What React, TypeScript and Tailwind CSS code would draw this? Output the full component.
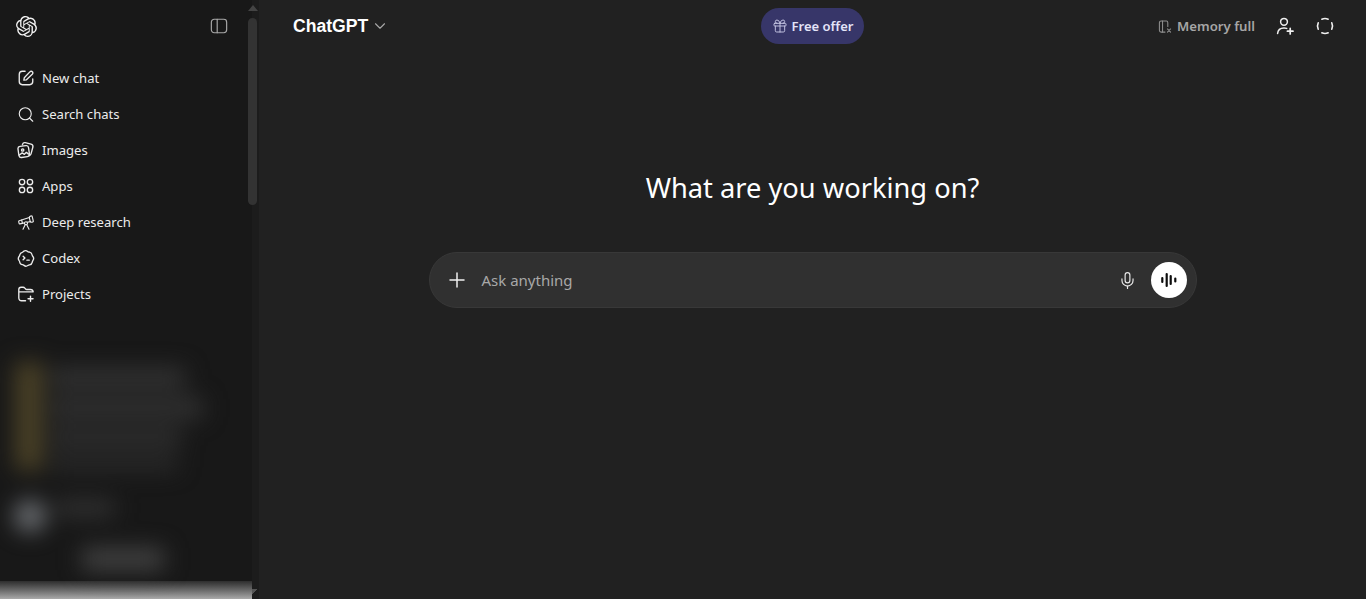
import React from 'react';
import { Gift, Mic, Plus, Search, Telescope, ChevronDown } from 'lucide-react';

const uiFont = "font-['Noto_Sans','Open_Sans',sans-serif]";

const OpenAiLogo = () => (
  <svg viewBox="0 0 24 24" className="w-[21px] h-[21px]" fill="#f2f2f2">
    <path d="M22.2819 9.8211a5.9847 5.9847 0 0 0-.5157-4.9108 6.0462 6.0462 0 0 0-6.5098-2.9A6.0651 6.0651 0 0 0 4.9807 4.1818a5.9847 5.9847 0 0 0-3.9977 2.9 6.0462 6.0462 0 0 0 .7427 7.0966 5.98 5.98 0 0 0 .511 4.9107 6.051 6.051 0 0 0 6.5146 2.9001A5.9847 5.9847 0 0 0 13.2599 24a6.0557 6.0557 0 0 0 5.7718-4.2058 5.9894 5.9894 0 0 0 3.9977-2.9001 6.0557 6.0557 0 0 0-.7475-7.0729zm-9.022 12.6081a4.4755 4.4755 0 0 1-2.8764-1.0408l.1419-.0804 4.7783-2.7582a.7948.7948 0 0 0 .3927-.6813v-6.7369l2.02 1.1686a.071.071 0 0 1 .038.052v5.5826a4.504 4.504 0 0 1-4.4945 4.4944zm-9.6607-4.1254a4.4708 4.4708 0 0 1-.5346-3.0137l.142.0852 4.783 2.7582a.7712.7712 0 0 0 .7806 0l5.8428-3.3685v2.3324a.0804.0804 0 0 1-.0332.0615L9.74 19.9502a4.4992 4.4992 0 0 1-6.1408-1.6464zM2.3408 7.8956a4.485 4.485 0 0 1 2.3655-1.9728V11.6a.7664.7664 0 0 0 .3879.6765l5.8144 3.3543-2.0201 1.1685a.0757.0757 0 0 1-.071 0l-4.8303-2.7865A4.504 4.504 0 0 1 2.3408 7.872zm16.5963 3.8558L13.1038 8.364 15.1192 7.2a.0757.0757 0 0 1 .071 0l4.8303 2.7913a4.4944 4.4944 0 0 1-.6765 8.1042v-5.6772a.79.79 0 0 0-.407-.667zm2.0107-3.0231l-.142-.0852-4.7735-2.7818a.7759.7759 0 0 0-.7854 0L9.409 9.2297V6.8974a.0662.0662 0 0 1 .0284-.0615l4.8303-2.7866a4.4992 4.4992 0 0 1 6.6802 4.66zM8.3065 12.863l-2.02-1.1638a.0804.0804 0 0 1-.038-.0567V6.0742a4.4992 4.4992 0 0 1 7.3757-3.4537l-.142.0805L8.704 5.459a.7948.7948 0 0 0-.3927.6813zm1.0976-2.3654l2.602-1.4998 2.6069 1.4998v2.9994l-2.5974 1.4997-2.6067-1.4997Z" />
  </svg>
);

const iconProps = {
  viewBox: '0 0 20 20',
  fill: 'none',
  stroke: 'currentColor',
  strokeWidth: 1.5,
  strokeLinecap: 'round' as const,
  strokeLinejoin: 'round' as const,
};

const SidebarToggle = () => (
  <svg {...iconProps} className="w-[18px] h-[18px] mt-[1px] text-[#a8a8a8]" strokeWidth={1.3}>
    <rect x="1.5" y="2.5" width="17" height="15" rx="3.2" />
    <path d="M8 2.500v15" />
  </svg>
);

const NewChatIcon = () => (
  <svg {...iconProps} className="w-[18px] h-[18px]">
    <path d="M9 2.500H6C3.800 2.500 2.500 3.800 2.500 6v8c0 2.200 1.300 3.500 3.500 3.500h8c2.200 0 3.500-1.300 3.500-3.500v-3" />
    <path d="M7.600 12.400l.5-2.600 6.200-6.600c.9-.9 2.100-.9 2.800-.1.800.8.700 1.900-.2 2.800l-6.400 6.100z" />
  </svg>
);

const ImagesIcon = () => (
  <svg {...iconProps} className="w-[18px] h-[18px]">
    <rect x="1.600" y="5.600" width="11.800" height="12.400" rx="2.600" transform="rotate(-8 7 12)" />
    <path d="M6 4.200l.2-.6c.4-1.300 1.700-2 3-1.700l6.400 1.600c1.500.4 2.400 1.900 2 3.400l-2 7.400c-.3 1.100-1.100 1.800-2.100 2" />
    <circle cx="6.300" cy="10" r="1.300" />
    <path d="M2.600 15.600l3.200-2.400 2.400 1.600 2.200-2.200 2.400 2" />
  </svg>
);

const AppsIcon = () => (
  <svg {...iconProps} className="w-[18px] h-[18px]">
    <circle cx="5.600" cy="5.600" r="3" />
    <circle cx="14.400" cy="5.600" r="3" />
    <circle cx="5.600" cy="14.400" r="3" />
    <circle cx="14.400" cy="14.400" r="3" />
  </svg>
);

const CodexIcon = () => (
  <svg {...iconProps} className="w-[18px] h-[18px]">
    <path d="M7.200 2.600c1.600-1 3.400-.9 4.600.2.600.5 1.400.5 2.200.7 1.500.4 2.600 1.600 2.800 3.200.1.700.5 1.300 1 1.900.9 1.300.8 3-.2 4.300-.4.600-.6 1.200-.7 1.900-.3 1.500-1.400 2.600-3 2.800-.7.100-1.300.4-1.900.8-1.300.9-3 .8-4.200-.2-.5-.4-1.100-.7-1.800-.8-1.600-.2-2.800-1.400-3-3-.1-.7-.4-1.300-.8-1.800-.9-1.300-.9-3 .1-4.300.4-.5.7-1.100.8-1.800.3-1.400 1.400-2.500 2.800-2.800.5-.1.900-.5 1.300-1.100z" />
    <path d="M6.800 8l2 2-2 2M11 12.400h2.600" />
  </svg>
);

const FolderPlusIcon = () => (
  <svg {...iconProps} className="w-[18px] h-[18px]">
    <path d="M9.500 17.500H5c-1.800 0-3-1.200-3-3V5c0-1.500 1-2.500 2.500-2.500h2.300c.8 0 1.400.3 1.900.9l.9 1.100c.3.4.7.5 1.200.5H15c1.600 0 2.800 1.100 3 2.600H2" />
    <path d="M15 12.500v5.500M12.300 15.300h5.500" strokeWidth={1.6} />
  </svg>
);

const MemoryFullIcon = () => (
  <svg {...iconProps} className="w-[14px] h-[15px] text-[#8f8f8f]" strokeWidth={1.5}>
    <path d="M14 10V4.500C14 3.100 13.100 2 12 2H4.500C3.100 2 2 3.100 2 4.500v11C2 16.900 3.100 18 4.500 18H10" />
    <path d="M6.500 2v16M13.500 13.500l4.500 4.500M18 13.500L13.500 18" />
  </svg>
);

const UserPlusIcon = () => (
  <svg {...iconProps} className="w-[20px] h-[20px]">
    <circle cx="9" cy="5.800" r="3.400" />
    <path d="M2.600 17.500c.3-3.600 2.800-5.600 6.400-5.600 1 0 1.900.2 2.700.5" />
    <path d="M15.200 12.400v5.600M12.400 15.200H18" strokeWidth={1.7} />
  </svg>
);

const DashedCircleIcon = () => (
  <svg {...iconProps} className="w-[20px] h-[20px]" strokeWidth={1.6}>
    <path d="M6.830 3.200a7.500 7.500 0 0 1 6.340 0M16.800 6.830a7.500 7.500 0 0 1 0 6.340M13.170 16.800a7.500 7.500 0 0 1-6.340 0M3.200 13.170a7.500 7.500 0 0 1 0-6.340" />
  </svg>
);

const VoiceIcon = () => (
  <svg viewBox="0 0 20 20" className="w-[20px] h-[20px]" fill="none" stroke="#0d0d0d" strokeWidth="2.200" strokeLinecap="round">
    <path d="M3.300 8v4M7.700 4v12M11.700 6v8M16.300 8.500v3" />
  </svg>
);

const navItems: { label: string; icon: React.ReactNode }[] = [
  { label: 'New chat', icon: <NewChatIcon /> },
  { label: 'Search chats', icon: <Search className="w-[19px] h-[19px]" strokeWidth={1.5} /> },
  { label: 'Images', icon: <ImagesIcon /> },
  { label: 'Apps', icon: <AppsIcon /> },
  { label: 'Deep research', icon: <Telescope className="w-[19px] h-[19px]" strokeWidth={1.5} /> },
  { label: 'Codex', icon: <CodexIcon /> },
  { label: 'Projects', icon: <FolderPlusIcon /> },
];

const Sidebar = () => (
  <aside className="w-[259px] h-full shrink-0 flex bg-[#181818] text-[#ececec]">
    <div className="w-[252px] shrink-0 flex flex-col overflow-hidden">
      <div className="h-[60px] shrink-0 flex justify-between pl-[16px] pr-[24px] pt-[16px]">
        <OpenAiLogo />
        <SidebarToggle />
      </div>
      <nav className="flex flex-col">
        {navItems.map((item) => (
          <div key={item.label} className="h-9 flex items-center gap-[7px] pl-[17px] text-[13.1px]">
            <span className="w-[18px] flex justify-center">{item.icon}</span>
            <span className="pt-[1px]">{item.label}</span>
          </div>
        ))}
      </nav>
      {/* recent chats and the account card are blurred out in the picture */}
      <div className="flex-1 min-h-0 overflow-hidden pt-[50px] blur-[11px]">
        <div className="flex gap-[8px] pl-[15px]">
          <div className="w-[28px] h-[108px] bg-[#4a4126]" />
          <div className="flex flex-col gap-[10px] pt-[6px]">
            <div className="w-[134px] h-[20px] bg-[#333333]" />
            <div className="w-[152px] h-[20px] bg-[#323232]" />
            <div className="w-[130px] h-[18px] bg-[#303030]" />
            <div className="w-[126px] h-[14px] bg-[#2c2c2c]" />
          </div>
        </div>
        <div className="flex gap-[10px] pl-[14px] pt-[30px]">
          <div className="w-[32px] h-[32px] rounded-full bg-[#6a6d71]" />
          <div className="w-[58px] h-[16px] bg-[#333333]" />
        </div>
        <div className="ml-[82px] mt-[16px] w-[82px] h-[22px] bg-[#424242]" />
      </div>
      <div className="h-[18px] shrink-0 bg-gradient-to-b from-[#2e2e2e] to-[#aaaaaa]" />
    </div>
    <div className="w-[7px] shrink-0 flex flex-col items-start bg-[#1c1c1c]">
      <div className="w-0 h-0 -ml-[4px] mt-[5px] border-x-[5px] border-x-transparent border-b-[6px] border-b-[#444444]" />
      <div className="w-[9px] h-[187px] -ml-[4px] mt-[7px] rounded-[5px] bg-[#333333]" />
      <div className="flex-1" />
      <div className="w-[5px] h-[6px] mb-[4px] bg-gradient-to-br from-[#555555] from-50% to-transparent to-50%" />
    </div>
  </aside>
);

const Header = () => (
  <header className="h-[52px] shrink-0 grid grid-cols-3 items-start pt-[8px]">
    <div className="flex items-center h-[36px] gap-[3px] pl-[34px]">
      <span className="font-['Liberation_Sans',sans-serif] text-[17.6px] font-bold text-white pt-[1px]">ChatGPT</span>
      <ChevronDown className="w-[18px] h-[18px] text-[#a8a8a8]" strokeWidth={1.5} />
    </div>
    <div className="flex justify-center">
      <div className="h-[36px] flex items-center gap-[4px] px-[11px] rounded-full bg-[#373669] text-[#e4e4f8] text-[13px] font-semibold">
        <Gift className="w-[16px] h-[16px] text-[#c9c9e6]" strokeWidth={1.4} />
        <span className="pt-[1px]">Free offer</span>
      </div>
    </div>
    <div className="flex items-center justify-end h-[36px] pr-[31px] text-[#f0f0f0]">
      <MemoryFullIcon />
      <span className="ml-[5px] pt-[1px] text-[13.2px] font-semibold text-[#a6a6a6]">Memory full</span>
      <span className="ml-[20px] flex"><UserPlusIcon /></span>
      <span className="ml-[20px] flex"><DashedCircleIcon /></span>
    </div>
  </header>
);

const Composer = () => (
  <div className="w-[768px] h-14 flex items-center rounded-[28px] bg-[#303030] border border-[#383838] pl-[15px] pr-[9px]">
    <Plus className="w-[24px] h-[24px] text-[#f0f0f0]" strokeWidth={1.5} />
    <span className="ml-[13px] pt-[1px] flex-1 text-[15px] text-[#a8a8a8]">Ask anything</span>
    <Mic className="w-[19px] h-[19px] text-[#e8e8e8]" strokeWidth={1.5} />
    <div className="ml-[14px] w-9 h-9 rounded-full bg-white flex items-center justify-center">
      <VoiceIcon />
    </div>
  </div>
);

export default function App() {
  return (
    <div className={`w-full h-[599px] overflow-hidden flex bg-[#212121] ${uiFont}`}>
      <Sidebar />
      <main className="flex-1 min-w-0 flex flex-col">
        <Header />
        <div className="flex flex-col items-center pt-[117px]">
          <h1 className="text-[27.25px] leading-[38px] font-normal text-white">What are you working on?</h1>
          <div className="mt-[45px]">
            <Composer />
          </div>
        </div>
      </main>
    </div>
  );
}
